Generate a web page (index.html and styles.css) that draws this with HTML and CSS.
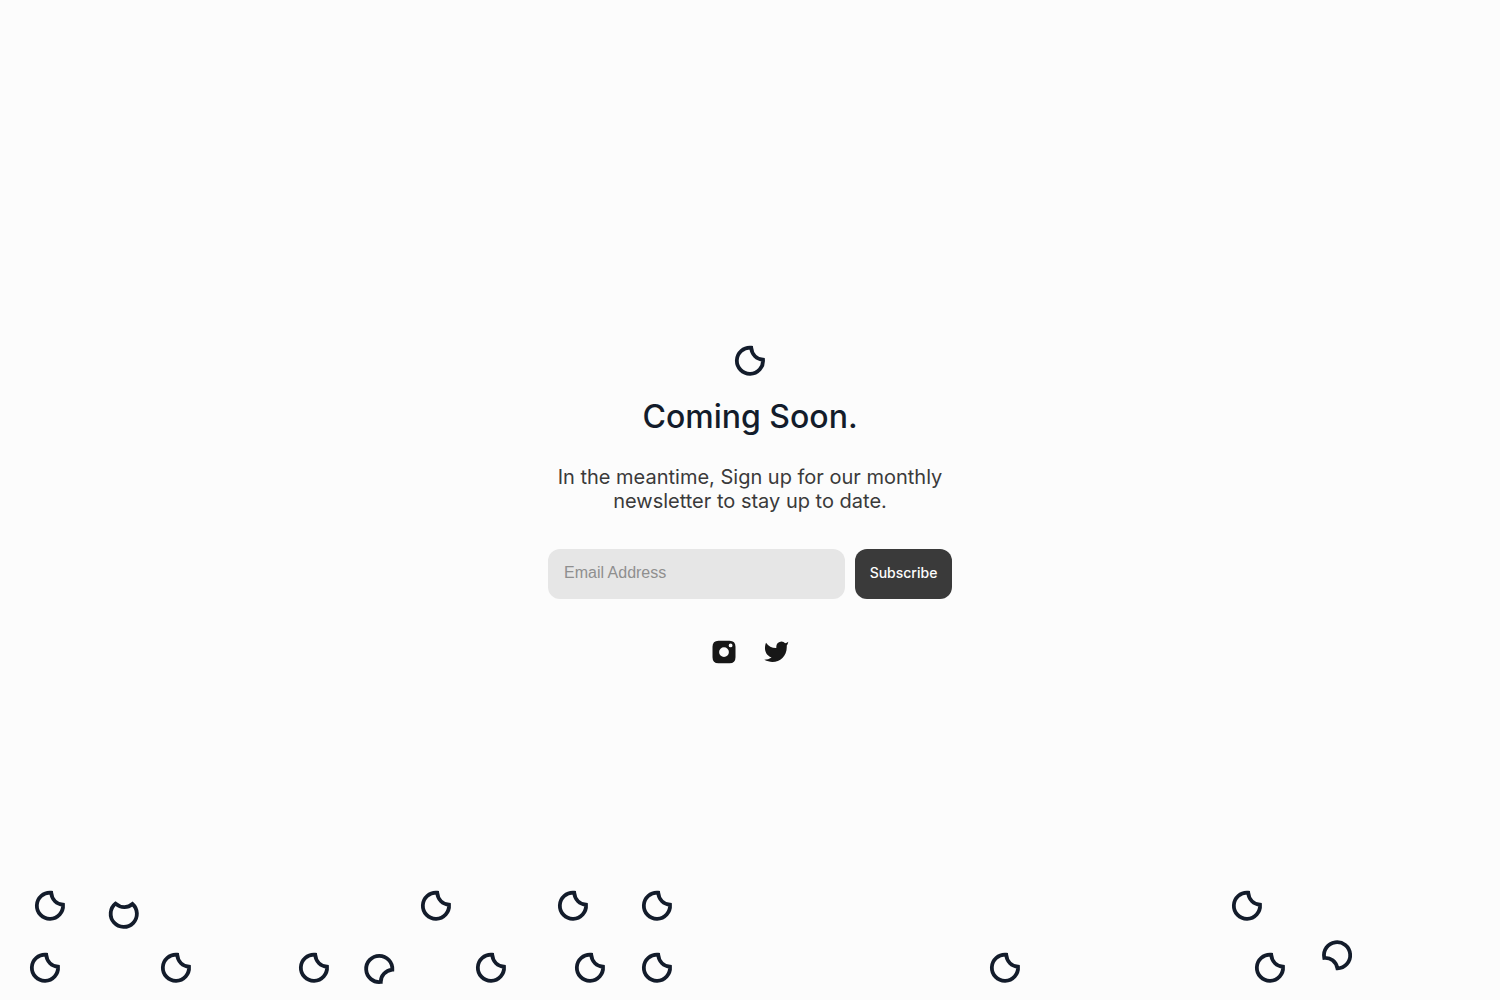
FILE: index.html
```html
<!DOCTYPE html>
<html lang="en">
<head>
<meta charset="utf-8">
<meta name="viewport" content="width=device-width, initial-scale=1">
<title>Coming Soon</title>
<link rel="stylesheet" href="styles.css">
</head>
<body>
<svg class="defs" aria-hidden="true">
  <symbol id="moon" viewBox="0 0 32 32">
    <path d="M17.200 2.700A13.100 13.100 0 1 0 29 14.700C22.700 14.400 17.800 9.800 17.200 2.700Z" fill="none" stroke="currentColor" stroke-width="3.800"/>
  </symbol>
</svg>
<main class="hero">
  <svg class="moon" aria-hidden="true"><use href="#moon"/></svg>
  <h1 class="title">Coming Soon.</h1>
  <p class="lead">In the meantime, Sign up for our monthly newsletter to stay up to date.</p>
  <form class="signup">
    <input class="email" type="email" placeholder="Email Address" aria-label="Email Address">
    <button class="subscribe" type="button">Subscribe</button>
  </form>
  <nav class="social" aria-label="Social">
    <a href="#instagram" aria-label="Instagram">
      <svg class="social-icon" viewBox="0 0 28 28"><path fill="currentColor" fill-rule="evenodd" d="M8.500 2.700H19.500Q25.500 2.700 25.500 8.700V19.300Q25.500 25.300 19.500 25.300H8.500Q2.500 25.300 2.500 19.300V8.700Q2.500 2.700 8.500 2.700ZM14 9.200A4.900 4.900 0 1 0 14 19A4.900 4.900 0 1 0 14 9.200ZM20.600 5.500A1.900 1.900 0 1 0 20.600 9.300A1.900 1.900 0 1 0 20.600 5.500Z"/></svg>
    </a>
    <a href="#twitter" aria-label="Twitter">
      <svg class="social-icon" viewBox="0 0 28 28"><path fill="currentColor" d="M26.300 3.800C25.400 4.500 24.300 5 23.200 5.300A5.100 5.100 0 0 0 14.300 8.700V9.900A12.200 12.200 0 0 1 4 4.700C4 4.700 -0.600 15.100 9.600 19.600A13.200 13.200 0 0 1 2.300 21.800C12.500 27.400 24.800 21.700 24.800 8.700Q24.800 8.200 24.700 7.800C25.500 6.700 26 5.400 26.300 3.800Z"/></svg>
    </a>
  </nav>
</main>
<div class="field" aria-hidden="true">
  <svg class="moon m1"><use href="#moon"/></svg>
  <svg class="moon m2"><use href="#moon"/></svg>
  <svg class="moon m3"><use href="#moon"/></svg>
  <svg class="moon m4"><use href="#moon"/></svg>
  <svg class="moon m5"><use href="#moon"/></svg>
  <svg class="moon m6"><use href="#moon"/></svg>
  <svg class="moon m7"><use href="#moon"/></svg>
  <svg class="moon m8"><use href="#moon"/></svg>
  <svg class="moon m9"><use href="#moon"/></svg>
  <svg class="moon m10"><use href="#moon"/></svg>
  <svg class="moon m11"><use href="#moon"/></svg>
  <svg class="moon m12"><use href="#moon"/></svg>
  <svg class="moon m13"><use href="#moon"/></svg>
  <svg class="moon m14"><use href="#moon"/></svg>
  <svg class="moon m15"><use href="#moon"/></svg>
  <svg class="moon m16"><use href="#moon"/></svg>
</div>
</body>
</html>
```
FILE: styles.css
```css
* { box-sizing: border-box; }

body {
  margin: 0;
  min-height: 100vh;
  display: flex;
  flex-direction: column;
  align-items: center;
  justify-content: center;
  background: #fcfcfc;
  color: #131c2b;
  font-family: Inter, "Liberation Sans", sans-serif;
}

.defs { position: absolute; width: 0; height: 0; }

.moon { display: block; width: 32px; height: 32px; color: #131c2b; }

.hero {
  display: flex;
  flex-direction: column;
  align-items: center;
  width: 100%;
  max-width: 404px;
  padding-top: 10px;
}

.title {
  margin: 20px 0 0;
  font-size: 32px;
  line-height: 40px;
  font-weight: 500;
}

.lead {
  margin: 28px 0 0;
  color: #3a3a3a;
  font-size: 20px;
  line-height: 24px;
  text-align: center;
}

.signup { display: flex; gap: 10px; width: 100%; margin-top: 36px; }

.email {
  flex: 1;
  min-width: 0;
  height: 50px;
  padding: 0 16px 2px;
  border: 0;
  border-radius: 12px;
  background: #e6e6e6;
  font-family: "Liberation Sans", Arial, sans-serif;
  font-size: 16px;
}

.email::placeholder { color: #8f8f8f; opacity: 1; }

.subscribe {
  width: 97px;
  padding: 0 0 2px;
  border: 0;
  border-radius: 12px;
  background: #3a3a3a;
  color: #fcfcfc;
  font-family: inherit;
  font-size: 14px;
  font-weight: 500;
}

.social { display: flex; gap: 24px; margin-top: 39px; color: #171717; }
.social a { color: inherit; }
.social-icon { display: block; width: 28px; height: 28px; }

/* Loose moons that have fallen to the bottom of the window */
.field { position: fixed; left: 0; right: 0; bottom: 0; height: 120px; pointer-events: none; }
.field .moon { position: absolute; bottom: 16px; }
.field .m1 { left: 34px; bottom: 78px; }
.field .m2 { left: 108px; bottom: 70px; transform: rotate(-44deg); }
.field .m3 { left: 420px; bottom: 78px; }
.field .m4 { left: 557px; bottom: 78px; }
.field .m5 { left: 641px; bottom: 78px; }
.field .m6 { left: 1231px; bottom: 78px; }
.field .m7 { left: 29px; }
.field .m8 { left: 160px; }
.field .m9 { left: 298px; }
.field .m10 { left: 363px; bottom: 15px; transform: rotate(88deg); }
.field .m11 { left: 475px; }
.field .m12 { left: 574px; }
.field .m13 { left: 641px; }
.field .m14 { left: 989px; }
.field .m15 { left: 1254px; }
.field .m16 { left: 1321px; bottom: 29px; transform: rotate(173deg); }
```
